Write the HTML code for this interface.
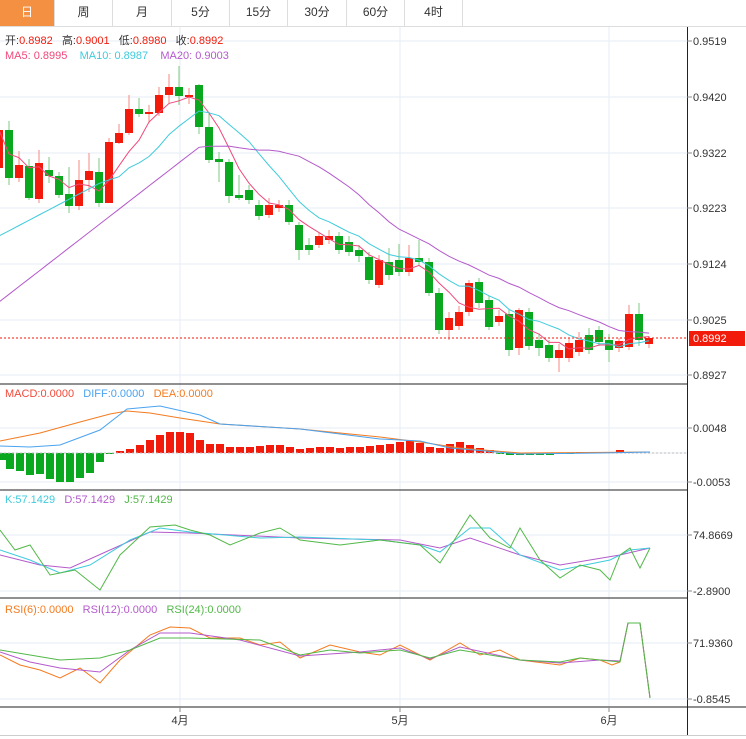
<!DOCTYPE html>
<html><head><meta charset="utf-8">
<style>
body{margin:0;width:746px;height:739px;overflow:hidden;background:#fff;font-family:"Liberation Sans","Noto Sans CJK SC",sans-serif;}
.tabs{position:absolute;left:0;top:0;height:26px;width:746px;border-bottom:1px solid #ddd;}
.tab{position:absolute;top:0;height:26px;line-height:25px;text-align:center;font-size:12px;color:#333;border-right:1px solid #ddd;}
svg{position:absolute;left:0;top:0;}
</style></head><body>
<div class="tabs">
<div class="tab" style="left:0;width:54px;background:#f39041;color:#fff">日</div>
<div class="tab" style="left:55px;width:57px">周</div>
<div class="tab" style="left:113px;width:58px">月</div>
<div class="tab" style="left:172px;width:57px">5分</div>
<div class="tab" style="left:230px;width:57px">15分</div>
<div class="tab" style="left:288px;width:58px">30分</div>
<div class="tab" style="left:347px;width:57px">60分</div>
<div class="tab" style="left:405px;width:57px">4时</div>
</div>
<svg id="s" width="746" height="739" style="top:0"></svg>
<script>
var s=document.getElementById('s'),h='';
function L(x1,y1,x2,y2,c,w,d){h+='<line x1="'+x1+'" y1="'+y1+'" x2="'+x2+'" y2="'+y2+'" stroke="'+c+'" stroke-width="'+(w||1)+'"'+(d?' stroke-dasharray="'+d+'"':'')+'/>';}
function T(x,y,t,c,sz,a){h+='<text x="'+x+'" y="'+y+'" fill="'+c+'" font-size="'+(sz||11)+'"'+(a?' text-anchor="'+a+'"':'')+'>'+t+'</text>';}
function P(pts,c){h+='<polyline fill="none" stroke="'+c+'" stroke-width="1" points="'+pts.map(function(p){return p.join(',')}).join(' ')+'"/>';}
var G='#e6eef4';
[41,97,153,208,264,320,375].forEach(function(y){L(0,y,687,y,G);});
[428,482,453].forEach(function(y){L(0,y,687,y,G);});
[535,591].forEach(function(y){L(0,y,687,y,G);});
[643,699].forEach(function(y){L(0,y,687,y,G);});
[180,400,609].forEach(function(x){L(x,27,x,707,G);});
var C=[[130,168,125,175,1],[130,178,121,185,0],[165,178,151,182,1],[166,198,159,200,0],[163,199,150,203,1],[170,176,157,183,0],[176,195,172,198,0],[194,206,167,213,0],[180,206,160,210,1],[171,180,153,192,1],[172,203,158,207,0],[142,203,138,203,1],[133,143,124,144,1],[109,133,95,135,1],[109,114,98,117,0],[112,114,105,123,1],[95,113,87,116,1],[87,95,74,103,1],[87,96,66,105,0],[95,97,88,104,1],[85,127,84,134,0],[127,160,112,163,0],[159,162,152,182,0],[162,196,159,203,0],[195,198,175,200,0],[190,200,185,204,0],[205,216,200,220,0],[205,215,198,218,1],[205,208,200,212,1],[205,222,200,225,0],[225,250,222,260,0],[245,250,238,255,0],[236,245,232,248,1],[236,240,230,244,1],[236,250,232,254,0],[242,252,236,256,0],[250,256,245,262,0],[257,280,252,284,0],[260,285,255,288,1],[262,275,248,280,0],[260,272,244,276,0],[258,272,245,276,1],[258,262,240,266,0],[262,293,258,296,0],[293,330,288,334,0],[318,330,312,340,1],[312,326,306,330,1],[283,312,280,316,1],[282,303,278,308,0],[300,327,296,330,0],[316,322,310,326,1],[314,350,310,356,0],[310,348,308,355,1],[312,346,308,350,0],[340,348,334,356,0],[345,358,340,362,0],[350,358,344,372,1],[343,358,338,362,1],[340,352,332,356,1],[335,350,328,354,0],[330,342,326,346,0],[340,350,334,362,0],[341,348,338,352,1],[314,347,305,350,1],[314,340,303,346,0],[338,344,336,348,1]];
var cl=[];
C.forEach(function(c,i){var x=-1+10*i,col=c[4]?'#f21a0a':'#0aa81e';L(x,c[2],x,c[3],c[4]?'#f58a80':'#7cc986');h+='<rect x="'+(x-4)+'" y="'+c[0]+'" width="8" height="'+Math.max(1,c[1]-c[0])+'" fill="'+col+'"/>';cl.push(c[4]?c[0]:c[1]);});
function ma(n,col,y0){var v=[];for(var i=0;i<cl.length;i++){var a=Math.max(0,i-n+1),sum=0;for(var j=a;j<=i;j++)sum+=cl[j];v.push(sum/(i-a+1));}
 if(y0!==undefined){var end=v[n];for(var i=0;i<n;i++)v[i]=y0+(end-y0)*i/n;}
 P(v.map(function(y,i){return[-1+10*i,y.toFixed(1)];}),col);}
ma(5,'#f0487a');ma(10,'#3fcbdc',236);ma(20,'#b45acb',302);
L(0,338,687,338,'#f21a0a',1,'2,2');
var hist=[-7,-16,-18,-22,-21,-26,-29,-29,-25,-20,-9,-1,2,4,8,13,18,21,21,20,13,9,9,6,6,6,7,8,8,6,4,5,6,6,5,6,6,7,8,9,11,12,10,6,5,9,11,8,5,3,-1,-2,-2,-2,-2,-2,-1,-1,1,1,1,1,3,1,0];
hist.forEach(function(v,i){var x=-1+10*i+1;if(i==0)x=3;h+='<rect x="'+(x-4)+'" y="'+(v>0?453-v:453)+'" width="8" height="'+Math.abs(v)+'" fill="'+(v>0?'#f21a0a':'#0aa81e')+'"/>';});
L(0,453,687,453,'#bbb',1,'2,2');
P([[0,441],[40,433],[80,422],[110,414],[127,411],[150,413],[180,418],[220,424],[300,429],[380,437],[420,442],[460,448],[520,453],[650,452]],'#f47b20');
P([[0,446],[30,447],[60,445],[100,430],[127,409],[160,406],[200,415],[220,424],[300,429],[380,439],[420,441],[450,448],[520,454],[600,453],[650,452]],'#4aa3f0');
P([[0,555],[40,565],[70,568],[110,550],[150,532],[190,533],[300,538],[400,540],[440,548],[470,538],[520,555],[560,565],[620,555],[650,548]],'#b45acb');
P([[0,550],[30,560],[60,573],[90,565],[130,540],[160,528],[190,532],[260,538],[300,537],[380,540],[420,545],[440,552],[470,528],[490,528],[520,555],[560,570],[610,560],[630,550],[650,548]],'#3fcbdc');
P([[0,530],[15,550],[30,545],[50,575],[75,570],[100,590],[120,555],[150,527],[175,525],[190,530],[210,535],[230,545],[260,533],[280,528],[300,540],[340,545],[380,540],[420,545],[440,563],[470,515],[490,538],[510,548],[520,528],[540,560],[560,578],[580,565],[600,570],[610,580],[620,555],[630,548],[640,568],[650,548]],'#52b848');
P([[0,655],[20,665],[40,670],[60,678],[80,668],[100,683],[120,660],[150,635],[170,627],[190,628],[210,638],[240,638],[260,645],[280,642],[300,658],[330,645],[360,652],[380,655],[400,645],[430,660],[460,643],[480,655],[500,650],[520,660],[560,665],[580,658],[600,660],[612,665],[620,662],[628,623],[640,623],[650,698]],'#f47b20');
P([[0,652],[30,662],[60,668],[100,672],[130,650],[160,633],[190,633],[240,640],[300,656],[360,652],[400,648],[430,659],[460,647],[520,660],[560,663],[600,660],[620,661],[628,623],[640,623],[650,698]],'#b45acb');
P([[0,650],[60,660],[100,658],[130,650],[160,638],[190,638],[260,640],[300,655],[330,650],[360,653],[400,650],[430,658],[460,650],[520,660],[560,662],[580,658],[600,660],[620,662],[628,623],[640,623],[650,698]],'#52b848');
[384,490,598,707].forEach(function(y){L(0,y,687,y,'#222');});
L(687.5,27,687.5,735,'#222');L(0,735.5,746,735.5,'#ccc');L(687,707,746,707,'#222');
[[41,'0.9519'],[97,'0.9420'],[153,'0.9322'],[208,'0.9223'],[264,'0.9124'],[320,'0.9025'],[375,'0.8927'],[428,'0.0048'],[482,'-0.0053'],[535,'74.8669'],[591,'-2.8900'],[643,'71.9360'],[699,'-0.8545']].forEach(function(a){L(687,a[0],692,a[0],'#888');T(693,a[0]+4,a[1],'#333',11);});
h+='<rect x="689" y="331" width="56" height="15" fill="#f21a0a"/>';T(693,342,'0.8992','#fff',11);
[[180,'4月'],[400,'5月'],[609,'6月']].forEach(function(a){L(a[0],707,a[0],712,'#888');T(a[0],724,a[1],'#333',11,'middle');});
h+='<text x="5" y="44" font-size="11" fill="#333" xml:space="preserve">开:<tspan fill="#f21a0a">0.8982</tspan>   高:<tspan fill="#f21a0a">0.9001</tspan>   低:<tspan fill="#f21a0a">0.8980</tspan>   收:<tspan fill="#f21a0a">0.8992</tspan></text>';
h+='<text x="5" y="59" font-size="11" xml:space="preserve"><tspan fill="#f0487a">MA5: 0.8995</tspan>    <tspan fill="#3fcbdc">MA10: 0.8987</tspan>    <tspan fill="#b45acb">MA20: 0.9003</tspan></text>';
h+='<text x="5" y="397" font-size="11" xml:space="preserve"><tspan fill="#f24a3a">MACD:0.0000</tspan>   <tspan fill="#4aa3f0">DIFF:0.0000</tspan>   <tspan fill="#f47b20">DEA:0.0000</tspan></text>';
h+='<text x="5" y="503" font-size="11" xml:space="preserve"><tspan fill="#3fcbdc">K:57.1429</tspan>   <tspan fill="#b45acb">D:57.1429</tspan>   <tspan fill="#52b848">J:57.1429</tspan></text>';
h+='<text x="5" y="613" font-size="11" xml:space="preserve"><tspan fill="#f47b20">RSI(6):0.0000</tspan>   <tspan fill="#b45acb">RSI(12):0.0000</tspan>   <tspan fill="#52b848">RSI(24):0.0000</tspan></text>';
s.innerHTML=h;
</script>
</body></html>
